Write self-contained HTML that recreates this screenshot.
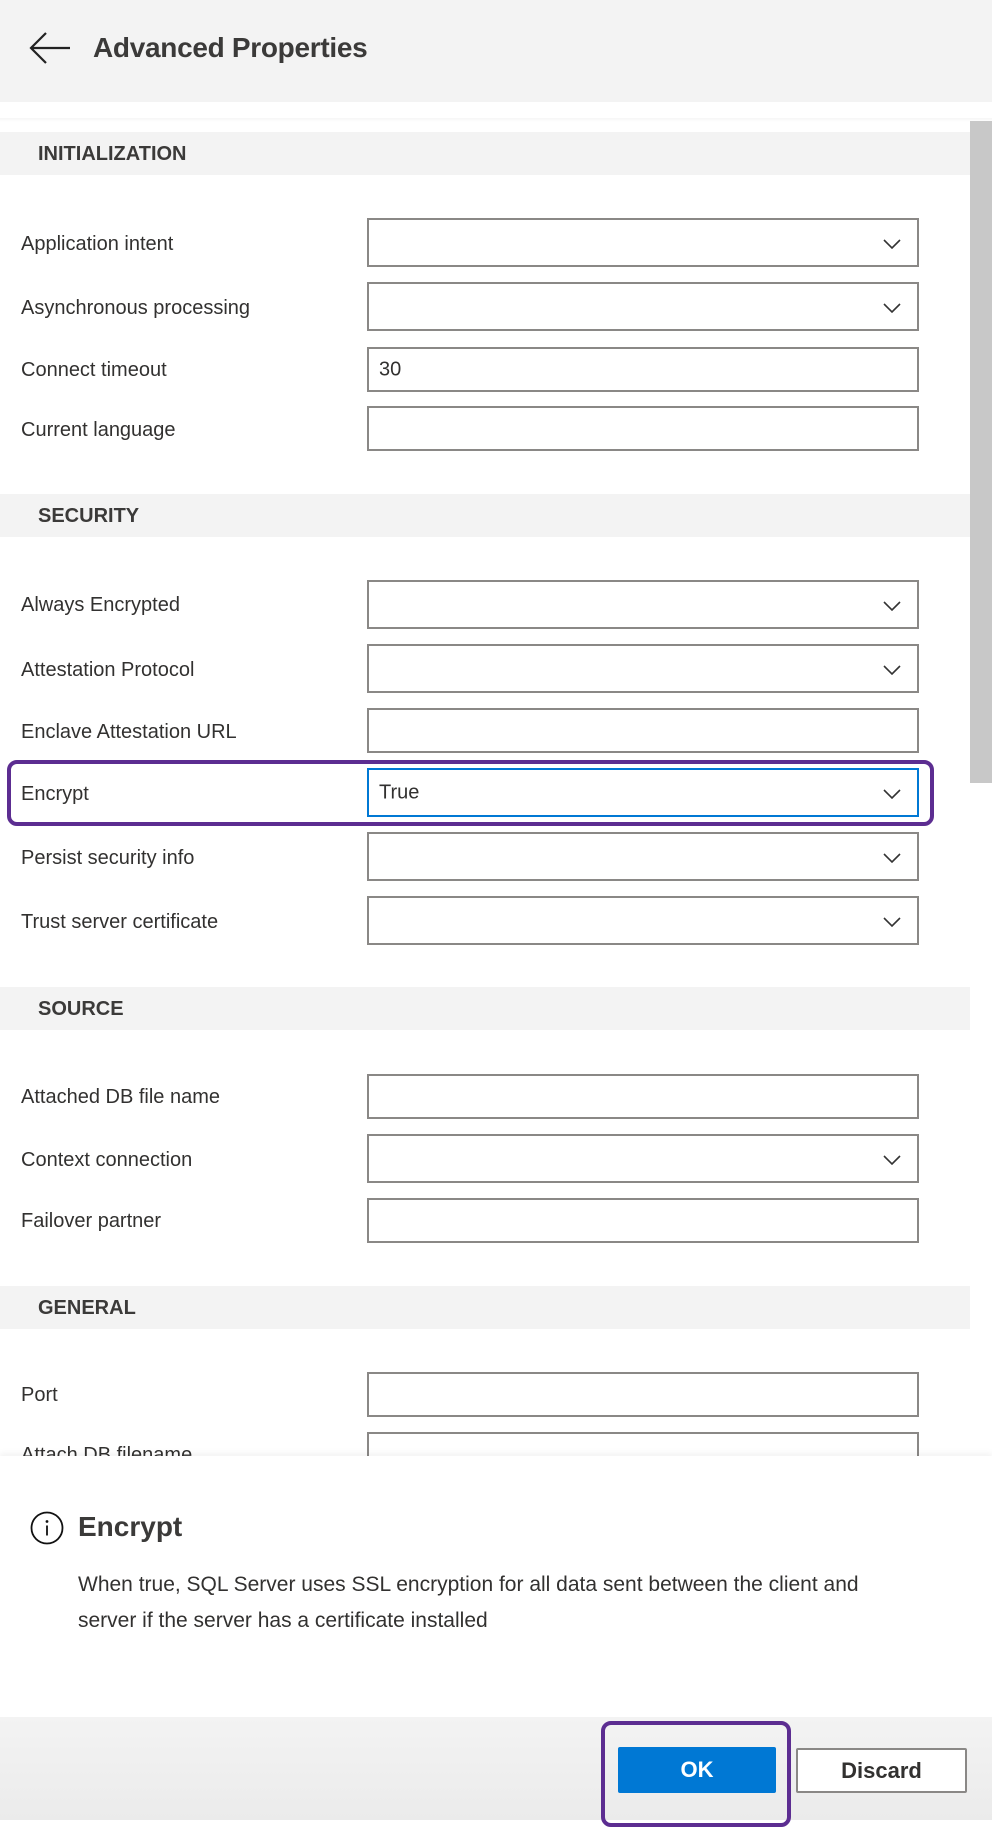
<!DOCTYPE html>
<html><head><meta charset="utf-8"><style>
*{margin:0;padding:0;box-sizing:border-box}
body{width:992px;height:1820px;position:relative;overflow:hidden;background:#fff;font-family:"Liberation Sans",sans-serif;color:#323130}
.abs{position:absolute}
.hdr{left:0;top:0;width:992px;height:102px;background:#f3f3f3}
.title{left:93px;top:32px;font-size:28px;font-weight:bold;color:#3b3a39;letter-spacing:-0.3px}
.sec{left:0;width:970px;height:43px;background:#f3f3f3;font-size:20px;font-weight:bold;color:#3b3a39;padding-left:38px;line-height:45px}
.lbl{left:21px;font-size:20px;color:#323130;line-height:24px;margin-top:2px}
.box{left:367px;width:552px;border:2px solid #8a8886;background:#fff}
.dd{height:49px}
.tb{height:45px}
.chev{position:absolute;right:16px;top:50%;margin-top:-4px}
.val{position:absolute;left:10px;top:50%;transform:translateY(-50%);font-size:20px}
</style></head><body>
<div class="abs hdr"></div>
<svg class="abs" style="left:28px;top:30px" width="44" height="36" viewBox="0 0 44 36"><path d="M42 18H4M18 3L3 18l15 15" fill="none" stroke="#222" stroke-width="2.2"/></svg>
<div class="abs title">Advanced Properties</div>
<div class="abs" style="left:0;top:118px;width:992px;height:4px;background:linear-gradient(#f6f6f6,#fff)"></div>
<div class="abs" style="left:970px;top:121px;width:22px;height:662px;background:#c8c8c8"></div>

<div class="abs sec" style="top:132px">INITIALIZATION</div>
<div class="abs sec" style="top:494px">SECURITY</div>
<div class="abs sec" style="top:987px">SOURCE</div>
<div class="abs sec" style="top:1286px">GENERAL</div>

<div class="abs lbl" style="top:230px">Application intent</div>
<div class="abs box dd" style="top:218px"><svg class="chev" width="18" height="10"><path d="M1 1l8 8 8-8" fill="none" stroke="#333" stroke-width="1.6"/></svg></div>
<div class="abs lbl" style="top:294px">Asynchronous processing</div>
<div class="abs box dd" style="top:282px"><svg class="chev" width="18" height="10"><path d="M1 1l8 8 8-8" fill="none" stroke="#333" stroke-width="1.6"/></svg></div>
<div class="abs lbl" style="top:356px">Connect timeout</div>
<div class="abs box tb" style="top:347px"><span class="val">30</span></div>
<div class="abs lbl" style="top:416px">Current language</div>
<div class="abs box tb" style="top:406px"></div>

<div class="abs lbl" style="top:591px">Always Encrypted</div>
<div class="abs box dd" style="top:580px"><svg class="chev" width="18" height="10"><path d="M1 1l8 8 8-8" fill="none" stroke="#333" stroke-width="1.6"/></svg></div>
<div class="abs lbl" style="top:656px">Attestation Protocol</div>
<div class="abs box dd" style="top:644px"><svg class="chev" width="18" height="10"><path d="M1 1l8 8 8-8" fill="none" stroke="#333" stroke-width="1.6"/></svg></div>
<div class="abs lbl" style="top:718px">Enclave Attestation URL</div>
<div class="abs box tb" style="top:708px"></div>
<div class="abs lbl" style="top:780px">Encrypt</div>
<div class="abs box dd" style="top:768px;border-color:#0078d4"><span class="val">True</span><svg class="chev" width="18" height="10"><path d="M1 1l8 8 8-8" fill="none" stroke="#333" stroke-width="1.6"/></svg></div>
<div class="abs" style="left:7px;top:760px;width:927px;height:66px;border:4px solid #5c2d91;border-radius:10px"></div>
<div class="abs lbl" style="top:844px">Persist security info</div>
<div class="abs box dd" style="top:832px"><svg class="chev" width="18" height="10"><path d="M1 1l8 8 8-8" fill="none" stroke="#333" stroke-width="1.6"/></svg></div>
<div class="abs lbl" style="top:908px">Trust server certificate</div>
<div class="abs box dd" style="top:896px"><svg class="chev" width="18" height="10"><path d="M1 1l8 8 8-8" fill="none" stroke="#333" stroke-width="1.6"/></svg></div>

<div class="abs lbl" style="top:1083px">Attached DB file name</div>
<div class="abs box tb" style="top:1074px"></div>
<div class="abs lbl" style="top:1146px">Context connection</div>
<div class="abs box dd" style="top:1134px"><svg class="chev" width="18" height="10"><path d="M1 1l8 8 8-8" fill="none" stroke="#333" stroke-width="1.6"/></svg></div>
<div class="abs lbl" style="top:1207px">Failover partner</div>
<div class="abs box tb" style="top:1198px"></div>

<div class="abs lbl" style="top:1381px">Port</div>
<div class="abs box tb" style="top:1372px"></div>
<div class="abs lbl" style="top:1441px">Attach DB filename</div>
<div class="abs box tb" style="top:1432px"></div>

<div class="abs" style="left:0;top:1456px;width:992px;height:261px;background:#fff;box-shadow:0 -3px 6px rgba(0,0,0,0.05)"></div>
<svg class="abs" style="left:30px;top:1511px" width="34" height="34" viewBox="0 0 34 34"><circle cx="17" cy="17" r="15.5" fill="none" stroke="#111" stroke-width="1.8"/><circle cx="17" cy="10.5" r="1.4" fill="#111"/><path d="M17 14.5v10" stroke="#111" stroke-width="1.8"/></svg>
<div class="abs" style="left:78px;top:1511px;font-size:28px;font-weight:bold;color:#3b3a39">Encrypt</div>
<div class="abs" style="left:78px;top:1567px;width:800px;font-size:21px;line-height:36px;color:#323130">When true, SQL Server uses SSL encryption for all data sent between the client and server if the server has a certificate installed</div>

<div class="abs" style="left:0;top:1717px;width:992px;height:103px;background:linear-gradient(#f3f3f3,#ebebeb)"></div>
<div class="abs" style="left:618px;top:1747px;width:158px;height:46px;background:#0078d4;border-radius:2px;color:#fff;font-size:22px;font-weight:bold;text-align:center;line-height:46px">OK</div>
<div class="abs" style="left:601px;top:1721px;width:190px;height:106px;border:4px solid #5c2d91;border-radius:10px"></div>
<div class="abs" style="left:796px;top:1748px;width:171px;height:45px;background:#fff;border:2px solid #8a8886;border-radius:2px;color:#323130;font-size:22px;font-weight:bold;text-align:center;line-height:41px">Discard</div>
</body></html>
